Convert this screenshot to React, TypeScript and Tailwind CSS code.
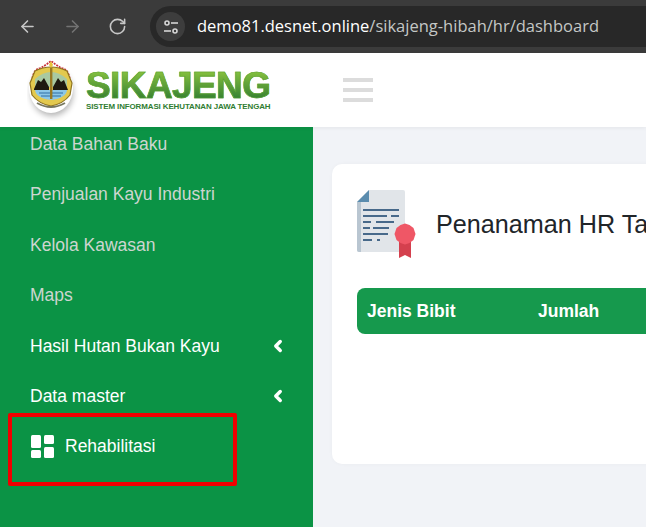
import { ArrowLeft, ArrowRight, RotateCw, ChevronLeft } from 'lucide-react';

const font = { sans: 'font-["Liberation_Sans",Arial,sans-serif]' };

function Emblem() {
  return (
    <svg width="52" height="62" viewBox="0 0 52 62" className="block">
      <defs>
        <filter id="soft" x="-30%" y="-30%" width="160%" height="160%">
          <feGaussianBlur stdDeviation="3" />
        </filter>
      </defs>
      <ellipse cx="25" cy="34" rx="21" ry="23" fill="#000" opacity="0.3" filter="url(#soft)" />
      <ellipse cx="24" cy="29" rx="22" ry="25" fill="#fff" />
      {/* red crown */}
      <path d="M5 22 Q6 10 14 9 L20 5 L24 2 L28 5 L34 9 Q42 10 43 22" fill="none" stroke="#c8323a" strokeWidth="1.8" strokeDasharray="2 1" />
      {/* shield */}
      <path d="M3 24 L8 12 Q16 8 24 8 Q32 8 40 12 L45 24 L43 36 Q36 45 24 47 Q12 45 5 36 Z" fill="#e3c94e" stroke="#8f7420" strokeWidth="1.2" />
      <path d="M8 20 Q16 13 24 13 Q32 13 40 20 L40 28 L8 28 Z" fill="#a9c9a0" />
      <path d="M7 30 L11 21 L14 23 L17 19 L22 28 L22 31 L7 31 Z" fill="#1f1a10" />
      <path d="M26 31 L26 28 L31 19 L34 23 L37 21 L41 31 Z" fill="#1f1a10" />
      <path d="M8 31 L40 31 Q39 39 24 41 Q9 39 8 31 Z" fill="#8cc7e8" />
      <path d="M12 34 H36 M14 37 H34" stroke="#2f6fa3" strokeWidth="1.2" />
      <rect x="23" y="8" width="2.4" height="32" fill="#9a7a22" />
      <path d="M24 2 L26 6 L24 9 L22 6 Z" fill="#e8c43a" />
      <path d="M10 44 Q24 52 38 44" fill="none" stroke="#77775f" strokeWidth="2" />
    </svg>
  );
}

function CertificateIcon() {
  return (
    <svg width="59" height="69" viewBox="0 0 59 69" className="block">
      <path d="M12 0 H46 Q48 0 48 2 V60 Q48 62 46 62 H2 Q0 62 0 60 V12 Z" fill="#e1e5e9" />
      <path d="M0 12 V60 Q0 62 2 62 H4 V12 Z" fill="#b9c6d1" />
      <path d="M12 0 V12 H0 Z" fill="#5b8cae" />
      <g fill="#47698a">
        <rect x="6" y="19" width="36" height="2" />
        <rect x="6" y="25" width="24" height="2" />
        <rect x="34" y="25" width="8" height="2" />
        <rect x="6" y="31" width="8" height="2" />
        <rect x="19" y="31" width="18" height="2" />
        <rect x="6" y="37" width="7" height="2" />
        <rect x="16" y="37" width="16" height="2" />
        <rect x="6" y="43" width="25" height="2" />
        <rect x="6" y="49" width="9" height="2" />
        <rect x="20" y="49" width="3" height="2" />
      </g>
      <path d="M42 46 H54 V68 L48 65 L42 68 Z" fill="#d4404e" />
      <path d="M48 33.5 L52.5 35 L56.5 38 L58.5 44 L56.5 50 L52.5 53 L48 54.5 L43.5 53 L39.5 50 L37.5 44 L39.5 38 L43.5 35 Z" fill="#ef5766" />
    </svg>
  );
}

function MenuItem({ label, bright, arrow }: { label: string; bright?: boolean; arrow?: boolean }) {
  return (
    <li className={`flex h-[50.4px] items-center justify-between pl-[30px] pr-[26px] text-[17.5px] ${bright ? 'text-white' : 'text-[#cdd6d0]'}`}>
      <span>{label}</span>
      {arrow && <ChevronLeft size={18} strokeWidth={4.5} className="text-white" />}
    </li>
  );
}

export default function App() {
  return (
    <div className={`relative flex h-[527px] w-[646px] flex-col overflow-hidden bg-[#f1f3f7] ${font.sans}`}>
      {/* browser chrome */}
      <div className="flex h-[53px] shrink-0 items-center bg-[#3b3b3b] pl-[18px]">
        <ArrowLeft size={19} strokeWidth={2} className="text-[#c7c7c7]" />
        <ArrowRight size={19} strokeWidth={2} className="ml-[26px] text-[#737373]" />
        <RotateCw size={19} strokeWidth={2} className="ml-[26px] text-[#c7c7c7]" />
        <div className="ml-[23px] flex h-[41px] flex-1 items-center rounded-l-full bg-[#282828] pl-[6px]">
          <div className="flex h-[29px] w-[29px] items-center justify-center rounded-full bg-[#3d3d3d]">
            <svg width="16" height="16" viewBox="0 0 16 16" fill="none" stroke="#d6d6d6" strokeWidth="1.6">
              <circle cx="4" cy="4" r="2" />
              <path d="M8 4 H15" />
              <circle cx="12" cy="12" r="2" />
              <path d="M1 12 H8" />
            </svg>
          </div>
          <span className='ml-[12px] whitespace-nowrap font-["Open_Sans",sans-serif] text-[16.5px] text-[#c4c7c5]'>
            <span className="text-white">demo81.desnet.online</span>/sikajeng-hibah/hr/dashboard
          </span>
        </div>
      </div>

      {/* app header */}
      <header className="z-10 flex h-[74px] shrink-0 items-center bg-white shadow-[0_1px_4px_rgba(0,0,0,0.06)]">
        <div className="flex w-[343px] items-center pl-[27px]">
          <Emblem />
          <div className="ml-[7px] flex flex-col">
            <span className="bg-gradient-to-b from-[#8cc63f] to-[#2a7a30] bg-clip-text text-[37px] leading-[33px] font-bold tracking-[-0.6px] text-transparent [-webkit-text-stroke:0.6px_#5ba32f]">
              SIKAJENG
            </span>
            <span className="mt-[1px] text-[7.95px] leading-[8px] font-bold tracking-[-0.1px] whitespace-nowrap text-[#2f7d32]">
              SISTEM INFORMASI KEHUTANAN JAWA TENGAH
            </span>
          </div>
        </div>
        <div className="flex w-[30px] flex-col gap-[6px]">
          <div className="h-1 bg-[#dcdcdc]" />
          <div className="h-1 bg-[#dcdcdc]" />
          <div className="h-1 bg-[#dcdcdc]" />
        </div>
      </header>

      <div className="flex min-h-0 flex-1">
        {/* sidebar */}
        <aside className="w-[313px] shrink-0 overflow-hidden bg-[#0b9345]">
          <ul className="mt-[-8px]">
            <MenuItem label="Data Bahan Baku" />
            <MenuItem label="Penjualan Kayu Industri" />
            <MenuItem label="Kelola Kawasan" />
            <MenuItem label="Maps" />
            <MenuItem label="Hasil Hutan Bukan Kayu" bright arrow />
            <MenuItem label="Data master" bright arrow />
            <li className="flex h-[50.4px] items-center pl-[31px] text-[17.5px] text-white">
              <svg width="23" height="23" viewBox="0 0 23 23" fill="#fff" className="mr-[11px]">
                <rect x="0" y="0" width="10" height="13" rx="1.5" />
                <rect x="13" y="0" width="10" height="9" rx="1.5" />
                <rect x="0" y="15" width="10" height="8" rx="1.5" />
                <rect x="13" y="12" width="10" height="11" rx="1.5" />
              </svg>
              Rehabilitasi
            </li>
          </ul>
        </aside>

        {/* content */}
        <main className="min-w-0 flex-1 pt-[37px] pl-[19px]">
          <div className="h-[300px] w-[400px] rounded-l-[10px] bg-white pt-[26px] pl-[25px] shadow-[0_0_4px_rgba(0,0,0,0.03)]">
            <div className="flex items-center">
              <CertificateIcon />
              <h1 className="ml-[20px] text-[25.2px] whitespace-nowrap text-[#212529]">Penanaman HR Tahun</h1>
            </div>
            <div className="mt-[29px] flex h-[46px] items-center rounded-l-[8px] bg-[#16994d] pl-[10px] text-[17.5px] font-bold text-white">
              <span className="w-[171px]">Jenis Bibit</span>
              <span>Jumlah</span>
            </div>
          </div>
        </main>
      </div>

      {/* red annotation box */}
      <div className="absolute top-[413px] left-[8px] h-[73px] w-[229px] rounded-[2px] border-[4px] border-[#f00000]" />
    </div>
  );
}
